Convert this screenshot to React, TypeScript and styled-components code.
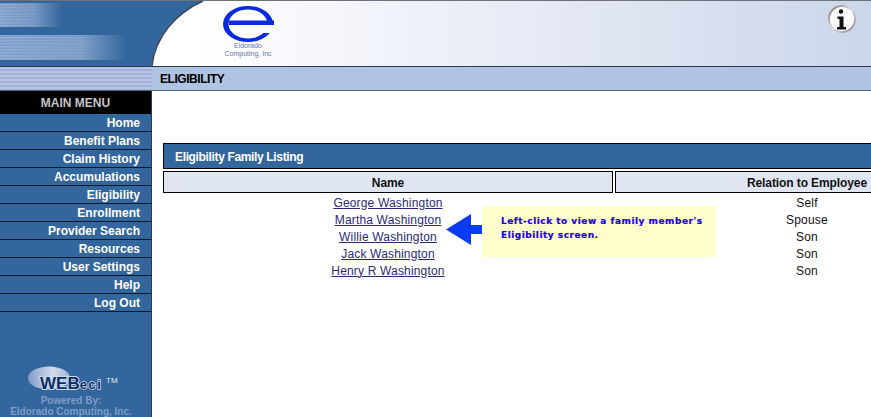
import React from 'react'
import styled, { createGlobalStyle } from 'styled-components'

const menuItems = [
  'Home',
  'Benefit Plans',
  'Claim History',
  'Accumulations',
  'Eligibility',
  'Enrollment',
  'Provider Search',
  'Resources',
  'User Settings',
  'Help',
  'Log Out',
]

const family = [
  { name: 'George Washington', relation: 'Self' },
  { name: 'Martha Washington', relation: 'Spouse' },
  { name: 'Willie Washington', relation: 'Son' },
  { name: 'Jack Washington', relation: 'Son' },
  { name: 'Henry R Washington', relation: 'Son' },
]

export default function App() {
  return (
    <Page>
      <GlobalStyle />
      <Banner>
        <BannerArt width="205" height="65" viewBox="0 0 205 65">
          <defs>
            <pattern id="lines" width="3" height="3" patternUnits="userSpaceOnUse">
              <rect width="3" height="1.5" fill="#fff" />
            </pattern>
            <linearGradient id="bandA" x1="0" x2="1" y1="0" y2="0">
              <stop offset="0" stopColor="#7f9fca" />
              <stop offset="0.55" stopColor="#7295c3" />
              <stop offset="1" stopColor="#33669c" />
            </linearGradient>
            <linearGradient id="bandB" x1="0" x2="1" y1="0" y2="0">
              <stop offset="0" stopColor="#7f9fca" />
              <stop offset="0.65" stopColor="#7c9cc8" />
              <stop offset="1" stopColor="#33669c" />
            </linearGradient>
            <linearGradient id="fade" x1="0" x2="1" y1="0" y2="0">
              <stop offset="0" stopColor="#fff" stopOpacity="0.16" />
              <stop offset="1" stopColor="#fff" stopOpacity="0" />
            </linearGradient>
            <mask id="fadeMaskA">
              <rect x="0" y="0" width="60" height="27" fill="url(#fade)" />
            </mask>
            <mask id="fadeMaskB">
              <rect x="0" y="33" width="125" height="27" fill="url(#fade)" />
            </mask>
          </defs>
          <path d="M0 0H203C176 12 155 36 152 65H0Z" fill="#33669c" />
          <rect x="0" y="2" width="62" height="24" fill="url(#bandA)" />
          <rect x="0" y="34" width="126" height="25" fill="url(#bandB)" />
          <rect x="0" y="2" width="60" height="24" fill="url(#lines)" mask="url(#fadeMaskA)" />
          <rect x="0" y="34" width="125" height="25" fill="url(#lines)" mask="url(#fadeMaskB)" />
          <path d="M203 0C176 12 155 36 152 65" fill="none" stroke="#3a4654" strokeWidth="1.5" />
        </BannerArt>
        <Logo>
          <svg width="52" height="37" viewBox="0 0 52 37">
            <ellipse cx="26" cy="18" rx="25" ry="18" fill="#0a2ae0" />
            <ellipse cx="26" cy="18" rx="19.5" ry="14.5" fill="#fff" />
            <path d="M7 14.5H52V19H7Z" fill="#0a2ae0" />
            <path d="M40 19H52V27H40Z" fill="#fff" />
          </svg>
          <LogoText>Eldorado</LogoText>
          <LogoText>Computing, Inc</LogoText>
        </Logo>
        <InfoIcon>
          <svg width="30" height="30" viewBox="0 0 30 30">
            <defs>
              <linearGradient id="ring" x1="0" x2="1" y1="0" y2="1">
                <stop offset="0" stopColor="#777" />
                <stop offset="0.5" stopColor="#ddd" />
                <stop offset="1" stopColor="#888" />
              </linearGradient>
            </defs>
            <circle cx="15" cy="15" r="13" fill="#fbfbfb" stroke="url(#ring)" strokeWidth="2" />
            <circle cx="14" cy="7.5" r="2.2" fill="#111" />
            <path d="M10.5 12.5H16.5V23H19V25.5H10V23H12.5V15H10.5Z" fill="#111" />
          </svg>
        </InfoIcon>
      </Banner>
      <SubBar>
        <SubBarStripes />
        <SubBarTitle>ELIGIBILITY</SubBarTitle>
      </SubBar>
      <Body>
        <Sidebar>
          <MenuTitle>MAIN MENU</MenuTitle>
          {menuItems.map(item => (
            <MenuItem key={item}>{item}</MenuItem>
          ))}
          <PoweredBy>
            <WebEci>
              <svg width="44" height="24" viewBox="0 0 44 24">
                <defs>
                  <linearGradient id="oval" x1="0" x2="1" y1="0" y2="0">
                    <stop offset="0" stopColor="#7f9ccb" />
                    <stop offset="0.6" stopColor="#d4dded" />
                    <stop offset="1" stopColor="#9fb4d8" />
                  </linearGradient>
                </defs>
                <ellipse cx="22" cy="12" rx="21" ry="11.5" fill="url(#oval)" />
              </svg>
              <WebEciMark>WEB<small>eci</small></WebEciMark>
              <Tm>TM</Tm>
            </WebEci>
            <PoweredText>Powered By:</PoweredText>
            <PoweredText>Eldorado Computing, Inc.</PoweredText>
          </PoweredBy>
        </Sidebar>
        <Main>
          <Listing>
            <ListingTitle>Eligibility Family Listing</ListingTitle>
            <Columns>
              <HeadCell>Name</HeadCell>
              <HeadCell>Relation to Employee</HeadCell>
              {family.map(member => (
                <React.Fragment key={member.name}>
                  <NameCell><a href="#">{member.name}</a></NameCell>
                  <RelationCell>{member.relation}</RelationCell>
                </React.Fragment>
              ))}
            </Columns>
            <Callout>
              <Arrow width="36" height="31" viewBox="0 0 36 31">
                <path d="M0 15.5L25 0V11H36V20H25V31Z" fill="#0a3cf5" />
              </Arrow>
              Left-click to view a family member's<br />Eligibility screen.
            </Callout>
          </Listing>
        </Main>
      </Body>
    </Page>
  )
}

const GlobalStyle = createGlobalStyle`
  html, body {
    margin: 0;
    padding: 0;
    background: #fff;
    font-family: "Liberation Sans", Arial, sans-serif;
  }

  * {
    box-sizing: border-box;
  }
`

const Page = styled.div`
  width: 871px;
  height: 417px;
  overflow: hidden;
  display: flex;
  flex-direction: column;
`

const Banner = styled.div`
  height: 66px;
  flex: none;
  display: flex;
  align-items: flex-start;
  border-top: 1px solid #6d7378;
  background: linear-gradient(90deg, #fff 22%, #f2f4fa 42%, #ccd6ea 100%);
`

const BannerArt = styled.svg`
  flex: none;
  display: block;
`

const Logo = styled.div`
  width: 52px;
  margin: 5px 0 0 17px;
  display: flex;
  flex-direction: column;
  align-items: center;

  svg {
    display: block;
    margin-bottom: -1px;
  }
`

const LogoText = styled.div`
  font-size: 7px;
  line-height: 8px;
  color: #6a76ac;
  white-space: nowrap;
`

const InfoIcon = styled.div`
  margin: 3px 0 0 auto;
  padding-right: 14px;

  svg {
    display: block;
  }
`

const SubBar = styled.div`
  height: 25px;
  flex: none;
  display: flex;
  align-items: center;
  border-top: 1px solid #2c3a4c;
  border-bottom: 1px solid #5d6470;
  background: #b1c3e3;
`

const SubBarStripes = styled.div`
  width: 152px;
  height: 100%;
  flex: none;
  background: repeating-linear-gradient(180deg, #b6c5e7 0 2px, #a4b1d7 2px 4px);
`

const SubBarTitle = styled.div`
  margin-left: 8px;
  font-size: 12px;
  font-weight: bold;
  letter-spacing: -0.45px;
  color: #000;
`

const Body = styled.div`
  flex: 1;
  min-height: 0;
  display: flex;
`

const Sidebar = styled.nav`
  width: 152px;
  flex: none;
  display: flex;
  flex-direction: column;
  background: #33669c;
  border-right: 1px solid #1d3c60;
`

const MenuTitle = styled.div`
  height: 23px;
  flex: none;
  display: flex;
  align-items: center;
  justify-content: center;
  padding-top: 1px;
  background: #000;
  color: #c4c4c4;
  font-size: 12px;
  font-weight: bold;
`

const MenuItem = styled.div`
  height: 18px;
  flex: none;
  display: flex;
  align-items: center;
  justify-content: flex-end;
  padding-right: 11px;
  border-bottom: 1px solid #0a1a30;
  color: #fff;
  font-size: 12px;
  font-weight: bold;
`

const PoweredBy = styled.div`
  margin-top: auto;
  display: flex;
  flex-direction: column;
  align-items: center;
  padding-right: 9px;
`

const WebEci = styled.div`
  position: relative;
  width: 90px;
  height: 28px;
  margin-bottom: 1px;

  svg {
    position: absolute;
    left: 1px;
    top: 0;
  }
`

const WebEciMark = styled.div`
  position: absolute;
  left: 14px;
  top: 9px;
  font-size: 17px;
  line-height: 18px;
  font-weight: bold;
  color: #0d2f63;
  -webkit-text-stroke: 2px #cfdaf0;
  paint-order: stroke fill;
  white-space: nowrap;

  small {
    font-size: 13px;
    letter-spacing: 1.5px;
    -webkit-text-stroke: 1.5px #cfdaf0;
  }
`

const Tm = styled.div`
  position: absolute;
  left: 80px;
  top: 10px;
  font-size: 8px;
  color: #dfe6f2;
`

const PoweredText = styled.div`
  font-size: 10px;
  line-height: 11px;
  font-weight: bold;
  color: #7f9ccb;
  white-space: nowrap;
`

const Main = styled.main`
  flex: 1;
  min-width: 0;
  overflow: hidden;
  padding: 52px 0 0 11px;
`

const Listing = styled.section`
  position: relative;
  width: 840px;
`

const ListingTitle = styled.div`
  height: 26px;
  display: flex;
  align-items: center;
  padding: 1px 0 0 11px;
  border: 1px solid #000;
  background: #33669c;
  color: #fff;
  font-size: 12px;
  font-weight: bold;
  letter-spacing: -0.35px;
`

const Columns = styled.div`
  display: grid;
  grid-template-columns: 450px 384px;
  column-gap: 2px;
  margin-top: 2px;
`

const HeadCell = styled.div`
  height: 22px;
  display: flex;
  align-items: center;
  justify-content: center;
  margin-bottom: 1px;
  padding-top: 1px;
  border: 1px solid #000;
  background: #e0e6f1;
  color: #111;
  font-size: 12px;
  font-weight: bold;
  letter-spacing: -0.1px;
`

const NameCell = styled.div`
  height: 17px;
  display: flex;
  align-items: center;
  justify-content: center;
  font-size: 12px;
  letter-spacing: 0.17px;

  a {
    color: #2a2a78;
  }
`

const RelationCell = styled.div`
  height: 17px;
  display: flex;
  align-items: center;
  justify-content: center;
  font-size: 12px;
  letter-spacing: 0.2px;
  color: #111;
`

const Callout = styled.div`
  position: absolute;
  left: 319px;
  top: 63px;
  width: 234px;
  height: 51px;
  padding: 8px 0 0 19px;
  background: #ffffcc;
  color: #2000e8;
  font-family: "DejaVu Sans", Verdana, sans-serif;
  font-size: 9px;
  line-height: 14px;
  font-weight: bold;
  letter-spacing: 0.5px;
  -webkit-text-stroke: 0.2px #2000e8;
  white-space: nowrap;
`

const Arrow = styled.svg`
  position: absolute;
  left: -36px;
  top: 8px;
`
